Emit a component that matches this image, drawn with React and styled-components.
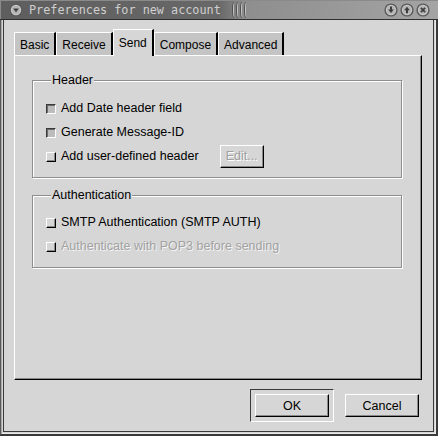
import React from "react";
import styled, { createGlobalStyle } from "styled-components";

const GlobalStyle = createGlobalStyle`
  html, body {
    margin: 0;
    padding: 0;
    background: #3c3c3c;
  }
  body {
    font-family: "Liberation Sans", Arial, sans-serif;
    font-size: 12.5px;
  }
`;

const Window = styled.div`
  width: 438px;
  height: 436px;
  display: flex;
  flex-direction: column;
  background: #d6d6d6;
  overflow: hidden;
`;

const TitleBar = styled.div`
  height: 19px;
  display: flex;
  align-items: center;
  background: linear-gradient(to right, #5e5e5e 0%, #686868 50%, #8e8e8e 56%, #a4a4a4 100%);
  border-bottom: 1px solid #2e2e2e;
  box-shadow: inset 1px 1px 0 #8a8a8a;
  padding-left: 9px;
  padding-right: 8px;
`;

const TitleText = styled.span`
  font-family: "DejaVu Sans Mono", monospace;
  font-size: 11.8px;
  color: #cfcfcf;
  margin-left: 6px;
  white-space: nowrap;
`;

const Ridges = styled.div`
  display: flex;
  gap: 1px;
  margin-left: 12px;
  height: 17px;
  align-items: center;
`;

const Ridge = styled.span`
  width: 2px;
  height: 16px;
  border-left: 1px solid #c4c4c4;
  border-radius: 60% 0 0 60%;
  box-shadow: -1px 0 0 #505050;
`;

const Spacer = styled.div`
  flex: 1;
`;

const TitleButtons = styled.div`
  display: flex;
  gap: 2px;
`;

function RoundIcon({ kind }) {
  return (
    <svg width="14" height="14" viewBox="0 0 14 14">
      <circle cx="7" cy="7" r="6.6" fill="#5a5a5a" />
      <circle cx="7" cy="7" r="5.2" fill="#c8c8c8" />
      <circle cx="7" cy="7" r="4" fill="#b4b4b4" />
      {kind === "menu" && <path d="M4.2 5.6 L9.8 5.6 L7 9.2 Z" fill="#3e3e3e" />}
      {kind === "down" && <path d="M6 3.6 H8 V6.6 H9.8 L7 10 L4.2 6.6 H6 Z" fill="#3e3e3e" />}
      {kind === "up" && <path d="M6 10.2 H8 V7.2 H9.8 L7 3.8 L4.2 7.2 H6 Z" fill="#3e3e3e" />}
      {kind === "close" && (
        <path d="M4.9 4.9 L9.1 9.1 M9.1 4.9 L4.9 9.1" stroke="#3e3e3e" strokeWidth="1.7" />
      )}
    </svg>
  );
}

const Frame = styled.div`
  flex: 1;
  display: flex;
  flex-direction: column;
  border-left: 1px solid #5a5a5a;
  border-right: 2px solid #3a3a3a;
  border-bottom: 2px solid #3a3a3a;
  box-shadow: inset 1px 0 0 #a8a8a8, inset -1px -1px 0 #e8e8e8;
  padding: 0 2px 2px 2px;
`;

const Client = styled.div`
  flex: 1;
  display: flex;
  flex-direction: column;
  border-left: 1px solid #3a3a3a;
  border-bottom: 1px solid #3a3a3a;
  border-right: 1px solid #3a3a3a;
  padding: 9px 7px 9px 10px;
`;

const Tabs = styled.div`
  display: flex;
  align-items: flex-end;
  height: 26px;
  position: relative;
  z-index: 1;
`;

const Tab = styled.div`
  height: ${(p) => (p.active ? "27px" : "23px")};
  padding: ${(p) => (p.active ? "0 5px" : "1px 5px 0 5px")};
  font-size: 12px;
  display: flex;
  align-items: center;
  justify-content: center;
  background: ${(p) => (p.active ? "#d6d6d6" : "#c4c4c4")};
  border-top: 1px solid #fff;
  border-left: 1px solid #fff;
  border-right: 2px solid #000;
  box-sizing: border-box;
  margin-bottom: ${(p) => (p.active ? "-1px" : "0")};
`;

const Panel = styled.div`
  height: 325px;
  width: 408px;
  box-sizing: border-box;
  border-top: 1px solid #fff;
  border-left: 1px solid #fff;
  border-right: 1px solid #000;
  border-bottom: 1px solid #000;
  box-shadow: inset -1px -1px 0 #8a8a8a;
  padding: 17px 19px 0 17px;
  display: flex;
  flex-direction: column;
  gap: 10px;
`;

const Group = styled.fieldset`
  margin: 0;
  padding: ${(p) => p.pad || 9}px 12px 9px 12px;
  border: 1px solid #8e8e8e;
  box-shadow: inset 1px 1px 0 #fff, 1px 1px 0 #fff;
  min-width: 0;
`;

const Legend = styled.legend`
  padding: 0 1px 0 1px;
  margin-left: 6px;
  background: #d6d6d6;
  color: #000;
  font-size: 12.5px;
  line-height: 14px;
`;

const Row = styled.div`
  height: 24px;
  display: flex;
  align-items: center;
  white-space: nowrap;
  color: ${(p) => (p.disabled ? "#a2a2a2" : "#000")};
  text-shadow: ${(p) => (p.disabled ? "1px 1px 0 #f4f4f4" : "none")};
`;

const Check = styled.span`
  width: 10px;
  height: 10px;
  box-sizing: border-box;
  margin: 1px 5px 0 1px;
  background: ${(p) => (p.checked ? "#bcbcbc" : "#d6d6d6")};
  border-top: 1px solid ${(p) => (p.checked ? "#3a3a3a" : "#fff")};
  border-left: 1px solid ${(p) => (p.checked ? "#3a3a3a" : "#fff")};
  border-right: 1px solid ${(p) => (p.checked ? "#fff" : "#000")};
  border-bottom: 1px solid ${(p) => (p.checked ? "#fff" : "#000")};
  box-shadow: ${(p) =>
    p.checked ? "inset 1px 1px 0 #6a6a6a" : "inset -1px -1px 0 #8a8a8a"};
  flex-shrink: 0;
`;

const Button = styled.button`
  font-family: "Liberation Sans", Arial, sans-serif;
  font-size: 12.5px;
  width: ${(p) => p.w || 74}px;
  height: 23px;
  margin: 0;
  padding: 0;
  background: #d6d6d6;
  color: ${(p) => (p.disabled ? "#a0a0a0" : "#000")};
  text-shadow: ${(p) => (p.disabled ? "1px 1px 0 #fff" : "none")};
  border-top: 1px solid #fff;
  border-left: 1px solid #fff;
  border-right: 1px solid #000;
  border-bottom: 1px solid #000;
  box-shadow: inset -1px -1px 0 #8a8a8a;
  box-sizing: border-box;
  cursor: default;
`;

const EditButton = styled(Button)`
  margin-left: 21px;
`;

const ButtonRow = styled.div`
  display: flex;
  justify-content: flex-end;
  align-items: center;
  gap: 11px;
  margin-top: 9px;
  padding-right: 7px;
`;

const DefaultRing = styled.div`
  padding: 4px;
  border-top: 1px solid #3a3a3a;
  border-left: 1px solid #3a3a3a;
  border-right: 1px solid #fff;
  border-bottom: 1px solid #fff;
  display: flex;
`;

export default function App() {
  return (
    <>
      <GlobalStyle />
      <Window>
        <TitleBar>
          <RoundIcon kind="menu" />
          <TitleText>Preferences for new account</TitleText>
          <Ridges>
            <Ridge />
            <Ridge />
            <Ridge />
            <Ridge />
          </Ridges>
          <Spacer />
          <TitleButtons>
            <RoundIcon kind="down" />
            <RoundIcon kind="up" />
            <RoundIcon kind="close" />
          </TitleButtons>
        </TitleBar>
        <Frame>
          <Client>
            <Tabs>
              <Tab>Basic</Tab>
              <Tab>Receive</Tab>
              <Tab active>Send</Tab>
              <Tab>Compose</Tab>
              <Tab>Advanced</Tab>
            </Tabs>
            <Panel>
              <Group>
                <Legend>Header</Legend>
                <Row>
                  <Check checked />
                  Add Date header field
                </Row>
                <Row>
                  <Check checked />
                  Generate Message-ID
                </Row>
                <Row>
                  <Check />
                  Add user-defined header
                  <EditButton w={44} disabled>
                    Edit...
                  </EditButton>
                </Row>
              </Group>
              <Group pad={8}>
                <Legend>Authentication</Legend>
                <Row>
                  <Check />
                  SMTP Authentication (SMTP AUTH)
                </Row>
                <Row disabled>
                  <Check />
                  Authenticate with POP3 before sending
                </Row>
              </Group>
            </Panel>
            <ButtonRow>
              <DefaultRing>
                <Button>OK</Button>
              </DefaultRing>
              <Button>Cancel</Button>
            </ButtonRow>
          </Client>
        </Frame>
      </Window>
    </>
  );
}
